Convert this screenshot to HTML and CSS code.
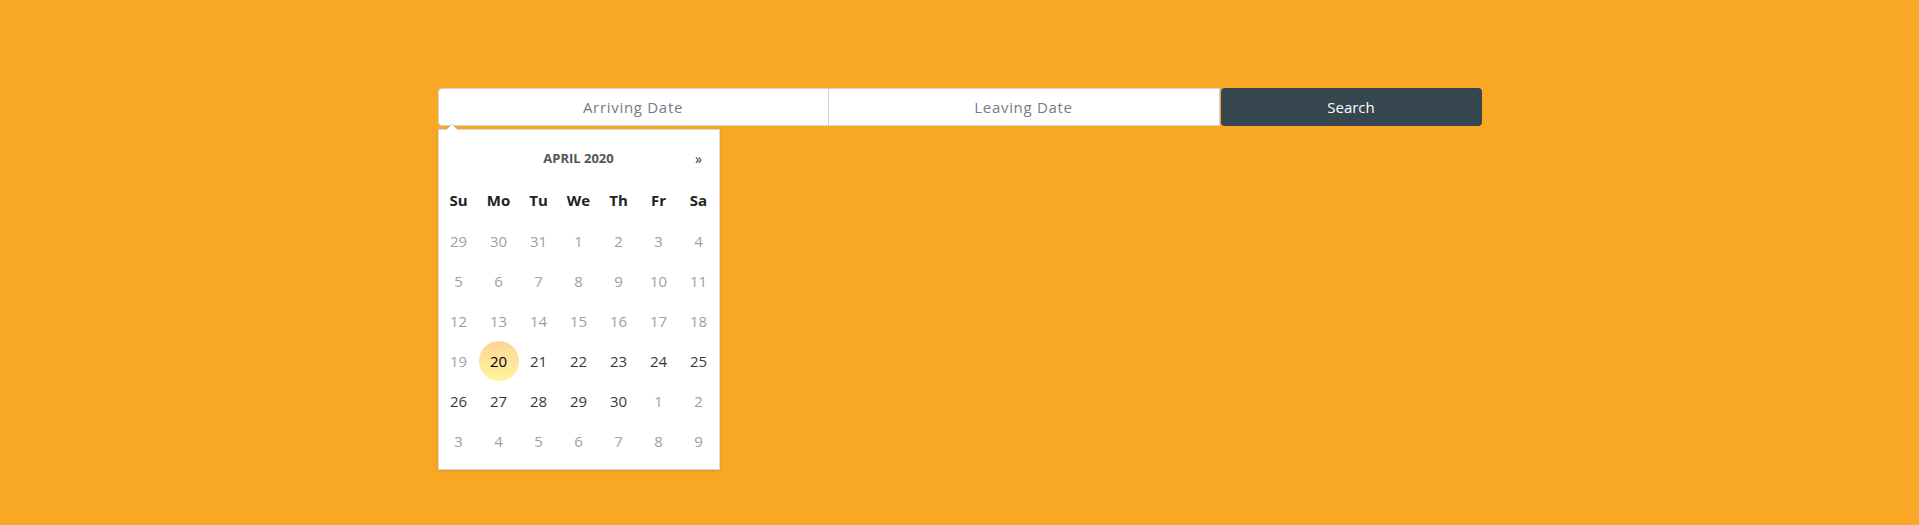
FILE: index.html
```html
<!DOCTYPE html>
<html lang="en">
<head>
<meta charset="utf-8">
<title>Date search</title>
<link rel="stylesheet" href="styles.css">
</head>
<body>
<div class="page">
  <form class="search-bar">
    <div class="field field-arrive">
      <input class="date-input first" type="text" placeholder="Arriving Date">
      <div class="datepicker">
        <table class="cal">
          <colgroup>
            <col class="col"><col class="col"><col class="col"><col class="col"><col class="col"><col class="col"><col class="col">
          </colgroup>
          <thead>
            <tr class="cal-head">
              <th class="nav"></th>
              <th class="switch" colspan="5">April 2020</th>
              <th class="nav">&raquo;</th>
            </tr>
            <tr class="dow">
              <th>Su</th><th>Mo</th><th>Tu</th><th>We</th><th>Th</th><th>Fr</th><th>Sa</th>
            </tr>
          </thead>
          <tbody>
            <tr><td class="old">29</td><td class="old">30</td><td class="old">31</td><td class="old">1</td><td class="old">2</td><td class="old">3</td><td class="old">4</td></tr>
            <tr><td class="old">5</td><td class="old">6</td><td class="old">7</td><td class="old">8</td><td class="old">9</td><td class="old">10</td><td class="old">11</td></tr>
            <tr><td class="old">12</td><td class="old">13</td><td class="old">14</td><td class="old">15</td><td class="old">16</td><td class="old">17</td><td class="old">18</td></tr>
            <tr><td class="old">19</td><td class="today"><span>20</span></td><td>21</td><td>22</td><td>23</td><td>24</td><td>25</td></tr>
            <tr><td>26</td><td>27</td><td>28</td><td>29</td><td>30</td><td class="old">1</td><td class="old">2</td></tr>
            <tr><td class="old">3</td><td class="old">4</td><td class="old">5</td><td class="old">6</td><td class="old">7</td><td class="old">8</td><td class="old">9</td></tr>
          </tbody>
        </table>
      </div>
    </div>
    <div class="field">
      <input class="date-input middle" type="text" placeholder="Leaving Date">
    </div>
    <button class="search-btn" type="button">Search</button>
  </form>
</div>
</body>
</html>
```

FILE: styles.css
```css
html, body {
  margin: 0;
  padding: 0;
}
body {
  background: #f9a826;
  font-family: "Open Sans", "Noto Sans", Arial, sans-serif;
  height: 525px;
  overflow: hidden;
}
.page {
  padding-top: 88px;
  display: flex;
  justify-content: center;
}
.search-bar {
  display: flex;
  width: 1044px;
  margin: 0;
}
.field {
  flex: 0 0 391px;
  position: relative;
}
.date-input {
  box-sizing: border-box;
  width: 100%;
  height: 38px;
  margin: 0;
  border: 1px solid #ced4da;
  background: #fff;
  text-align: center;
  font-family: inherit;
  font-size: 15px;
  color: #495057;
  outline: none;
  padding: 0 12px;
}
.date-input::placeholder {
  color: #757c83;
  letter-spacing: 0.7px;
}
.date-input.first {
  border-radius: 4px 0 0 4px;
}
.date-input.middle {
  border-left: none;
  border-radius: 0;
}
.search-btn {
  flex: 0 0 261px;
  height: 38px;
  margin: 0 0 0 1px;
  border: none;
  border-radius: 4px;
  background: #37474f;
  color: #fff;
  font-family: inherit;
  font-size: 15px;
  cursor: pointer;
}
.datepicker {
  position: absolute;
  top: 41px;
  left: 0;
  width: 280px;
  padding: 8px 0;
  background: #fff;
  border: 1px solid rgba(0, 0, 0, 0.15);
  box-shadow: 0 1px 3px rgba(0, 0, 0, 0.1);
}
.datepicker::before {
  content: "";
  position: absolute;
  top: -7px;
  left: 6px;
  border-left: 7px solid transparent;
  border-right: 7px solid transparent;
  border-bottom: 7px solid rgba(0, 0, 0, 0.15);
}
.datepicker::after {
  content: "";
  position: absolute;
  top: -6px;
  left: 7px;
  border-left: 6px solid transparent;
  border-right: 6px solid transparent;
  border-bottom: 6px solid #fff;
}
.cal {
  border-collapse: collapse;
  border-spacing: 0;
  width: 280px;
  table-layout: fixed;
}
.cal .col {
  width: 40px;
}
.cal th, .cal td {
  padding: 0;
  text-align: center;
}
.cal-head th {
  height: 40px;
  font-size: 13px;
  font-weight: 700;
  color: #555;
  text-transform: uppercase;
}
.cal-head .nav {
  font-size: 14px;
  font-weight: 400;
  color: #333;
}
.dow th {
  height: 43px;
  font-size: 15px;
  font-weight: 700;
  color: #222;
}
.cal td {
  height: 40px;
  font-size: 15px;
  color: #3a3a3a;
}
.cal td.old {
  color: #a0a0a0;
}
.cal td.today span {
  display: flex;
  align-items: center;
  justify-content: center;
  width: 40px;
  height: 40px;
  border-radius: 50%;
  background-image: linear-gradient(to bottom, #fdd49a, #fdf59a);
  color: #000;
}
```
